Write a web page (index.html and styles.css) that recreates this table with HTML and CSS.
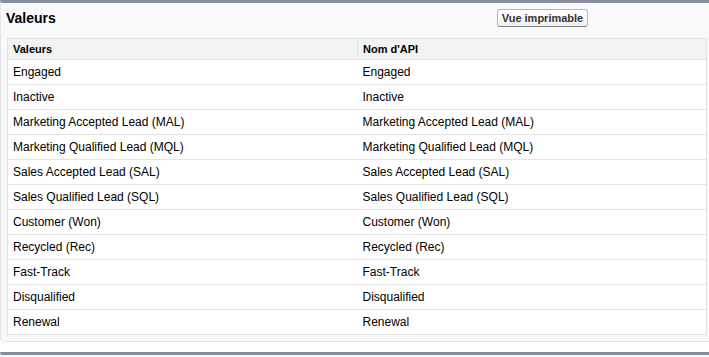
FILE: index.html
```html
<!DOCTYPE html>
<html>
<head>
<meta charset="utf-8">
<link rel="stylesheet" href="styles.css">
</head>
<body>
<div class="panel">
  <div class="panel-head">
    <h2 class="title">Valeurs</h2>
    <button class="btn">Vue imprimable</button>
  </div>
  <table class="list">
    <thead>
      <tr><th class="c1">Valeurs</th><th>Nom d'API</th></tr>
    </thead>
    <tbody>
      <tr><td>Engaged</td><td>Engaged</td></tr>
      <tr><td>Inactive</td><td>Inactive</td></tr>
      <tr><td>Marketing Accepted Lead (MAL)</td><td>Marketing Accepted Lead (MAL)</td></tr>
      <tr><td>Marketing Qualified Lead (MQL)</td><td>Marketing Qualified Lead (MQL)</td></tr>
      <tr><td>Sales Accepted Lead (SAL)</td><td>Sales Accepted Lead (SAL)</td></tr>
      <tr><td>Sales Qualified Lead (SQL)</td><td>Sales Qualified Lead (SQL)</td></tr>
      <tr><td>Customer (Won)</td><td>Customer (Won)</td></tr>
      <tr><td>Recycled (Rec)</td><td>Recycled (Rec)</td></tr>
      <tr><td>Fast-Track</td><td>Fast-Track</td></tr>
      <tr><td>Disqualified</td><td>Disqualified</td></tr>
      <tr><td>Renewal</td><td>Renewal</td></tr>
    </tbody>
  </table>
</div>
<div class="panel next"></div>
</body>
</html>
```
FILE: styles.css
```css
html, body {
  margin: 0;
  padding: 0;
  overflow: hidden;
  background: #ffffff;
  font-family: "Liberation Sans", Arial, sans-serif;
  color: #000;
}
.panel {
  width: 730px;
  box-sizing: border-box;
  border: 1px solid #e6e6e6;
  border-top: 3px solid #878ea2;
  border-radius: 0 0 4px 4px;
  background: linear-gradient(#f8f9fa, #f8f8f8);
  padding: 0 0 6px 6px;
}
.panel.next {
  margin-top: 10px;
  height: 20px;
  padding: 0;
}
.panel-head {
  height: 35px;
  display: flex;
  align-items: center;
  position: relative;
}
.title {
  margin: 0 0 6px -1px;
  font-size: 14px;
  font-weight: bold;
  color: #000;
}
.btn {
  position: absolute;
  left: 490px;
  top: 6px;
  height: 18px;
  width: 91px;
  padding: 0;
  font-family: "Liberation Sans", Arial, sans-serif;
  font-size: 11px;
  font-weight: bold;
  color: #333;
  background: linear-gradient(#ffffff, #f1f1f1);
  border: 1px solid #b5b5b5;
  border-bottom-color: #7f7f7f;
  border-radius: 3px;
}
.list {
  width: 700px;
  border-collapse: collapse;
  border: 1px solid #e0e3e5;
  background: #fff;
  font-size: 12px;
}
.list th {
  background: #f2f3f3;
  height: 20px;
  padding: 0 5px;
  text-align: left;
  font-size: 11px;
  font-weight: bold;
  color: #000;
  border-bottom: 1px solid #e0e3e5;
}
.list th.c1 {
  width: 339px;
  border-right: 1px solid #e0e3e5;
}
.list td {
  height: 24px;
  padding: 0 5px;
  border-bottom: 1px solid #e3e3e3;
  vertical-align: middle;
}
```
